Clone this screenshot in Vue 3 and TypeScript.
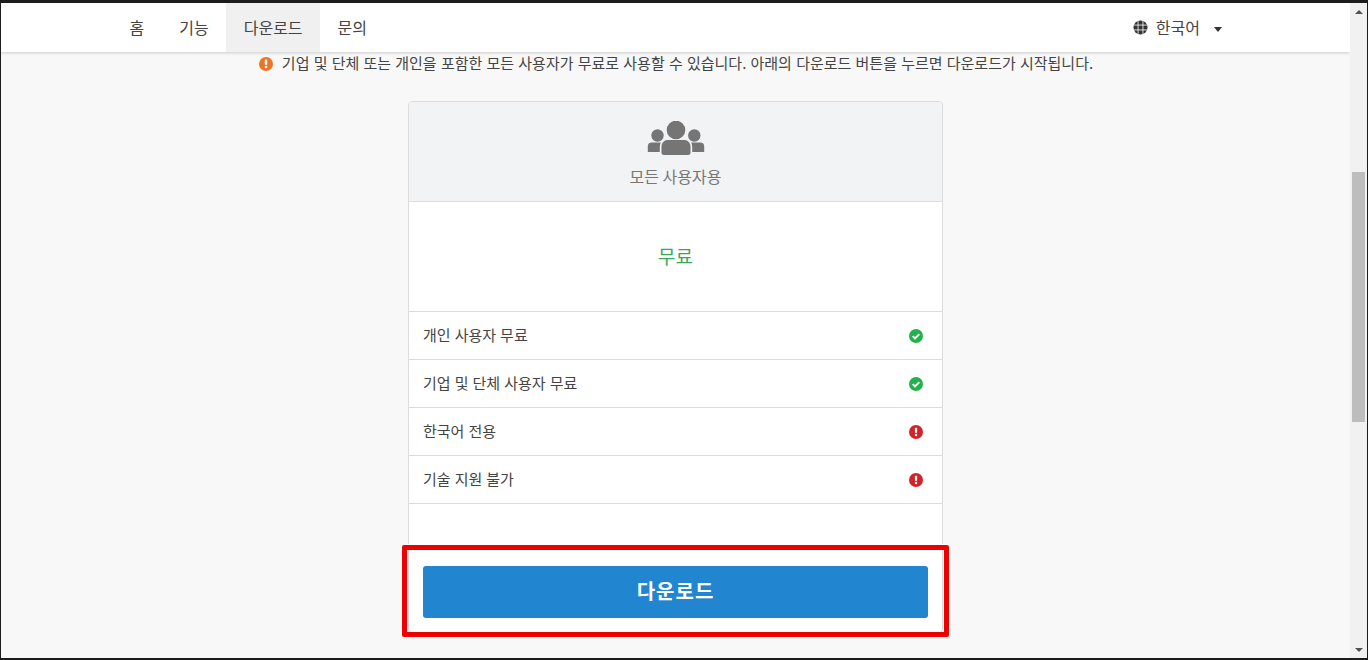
<script setup lang="ts">
const navItems = [
  { label: '홈', active: false },
  { label: '기능', active: false },
  { label: '다운로드', active: true },
  { label: '문의', active: false }
]

const features = [
  { label: '개인 사용자 무료', ok: true },
  { label: '기업 및 단체 사용자 무료', ok: true },
  { label: '한국어 전용', ok: false },
  { label: '기술 지원 불가', ok: false }
]
</script>

<template>
  <div class="frame">
    <div class="page">
      <div class="content">
        <header class="nav">
          <ul class="nav-list">
            <li v-for="item in navItems" :key="item.label" class="nav-item" :class="{ active: item.active }">
              {{ item.label }}
            </li>
          </ul>
          <div class="lang">
            <svg class="globe" viewBox="0 0 16 16">
              <circle cx="8" cy="8" r="7.5" fill="#333" />
              <path d="M1 5.4h14M1 10.6h14M5.4 1v14M10.6 1v14" stroke="#fff" stroke-width="1" fill="none" opacity="0.85" />
            </svg>
            <span class="lang-label">한국어</span>
            <i class="caret"></i>
          </div>
        </header>

        <main class="main">
          <p class="notice">
            <svg class="notice-icon" viewBox="0 0 16 16">
              <circle cx="8" cy="8" r="7" fill="#ee7423" />
              <rect x="6.8" y="3.6" width="2.4" height="5.4" rx="0.8" fill="#fff" />
              <circle cx="8" cy="11" r="1.3" fill="#fff" />
            </svg>
            <span class="notice-text">기업 및 단체 또는 개인을 포함한 모든 사용자가 무료로 사용할 수 있습니다. 아래의 다운로드 버튼을 누르면 다운로드가 시작됩니다.</span>
          </p>

          <section class="card">
            <div class="card-head">
              <svg class="users" viewBox="0 0 58 36">
                <circle cx="29" cy="9" r="9.300" fill="#757575" />
                <circle cx="10.500" cy="14.500" r="6.200" fill="#757575" />
                <circle cx="47.300" cy="14.500" r="6.200" fill="#757575" />
                <path d="M0.800 31v-5.500a4 4 0 0 1 4-4h9c-0.600 1.500-1 3-1 5v4.500z" fill="#757575" />
                <path d="M57.200 31v-5.500a4 4 0 0 0-4-4h-9c0.600 1.500 1 3 1 5v4.500z" fill="#757575" />
                <path d="M14.500 25.500c0-3.500 2.500-6.500 6-6.500h17c3.500 0 6 3 6 6.500v6a2.500 2.500 0 0 1-2.500 2.500h-24a2.500 2.500 0 0 1-2.500-2.500z" fill="#757575" />
              </svg>
              <div class="card-title">모든 사용자용</div>
            </div>
            <div class="price"><span class="price-text">무료</span></div>
            <ul class="features">
              <li v-for="f in features" :key="f.label" class="feature">
                <span class="feature-label">{{ f.label }}</span>
                <svg v-if="f.ok" class="mark" viewBox="0 0 14 14">
                  <circle cx="7" cy="7" r="7" fill="#22b14c" />
                  <path d="M3.700 7.200l2.300 2.300 4.300-4.400" stroke="#fff" stroke-width="1.900" fill="none" />
                </svg>
                <svg v-else class="mark" viewBox="0 0 14 14">
                  <circle cx="7" cy="7" r="7" fill="#d2232a" />
                  <rect x="5.900" y="2.800" width="2.200" height="5.200" rx="0.700" fill="#fff" />
                  <circle cx="7" cy="10" r="1.200" fill="#fff" />
                </svg>
              </li>
            </ul>
            <div class="card-foot">
              <button class="download" type="button">다운로드</button>
            </div>
          </section>
        </main>

        <div class="highlight"></div>
      </div>

      <div class="scrollbar">
        <span class="arrow up"></span>
        <div class="track"><div class="thumb"></div></div>
        <span class="arrow down"></span>
      </div>
    </div>
  </div>
</template>

<style>
html,
body {
  margin: 0;
  overflow: hidden;
}
</style>

<style scoped>
.frame {
  width: 1368px;
  height: 660px;
  box-sizing: border-box;
  border-top: 3px solid #1c1c1c;
  border-left: 1px solid #1c1c1c;
  border-right: 1px solid #1c1c1c;
  border-bottom: 2px solid #1c1c1c;
  font-family: "Noto Sans CJK KR", "Noto Sans", sans-serif;
  color: #333;
  overflow: hidden;
}

.page {
  display: flex;
  height: 100%;
}

.content {
  position: relative;
  flex: 1;
  min-width: 0;
  background: #f8f8f8;
  overflow: hidden;
}

.nav {
  display: flex;
  justify-content: space-between;
  align-items: stretch;
  height: 49px;
  padding: 0 128px 0 111px;
  background: #fff;
  box-shadow: 0 1px 3px rgba(0, 0, 0, 0.18);
  position: relative;
}

.nav-list {
  display: flex;
  list-style: none;
  margin: 0;
  padding: 0;
}

.nav-item {
  display: flex;
  align-items: center;
  padding: 0 17.500px 2px;
  font-size: 16px;
  color: #444;
}

.nav-item.active {
  background: #f0f0f0;
}

.lang {
  display: flex;
  align-items: center;
}

.globe {
  width: 15px;
  height: 15px;
}

.lang-label {
  margin: 0 0 2px 8px;
  font-size: 16px;
  color: #444;
}

.caret {
  width: 0;
  height: 0;
  margin: 3px 0 0 14px;
  border-left: 4.500px solid transparent;
  border-right: 4.500px solid transparent;
  border-top: 5px solid #333;
}

.main {
  display: flex;
  flex-direction: column;
  align-items: center;
}

.notice {
  display: flex;
  align-items: center;
  margin: 0;
  height: 22px;
  font-size: 15px;
  word-spacing: 0.850px;
  color: #444;
  white-space: nowrap;
}

.notice-icon {
  width: 16px;
  height: 16px;
  margin: 1px 8px 0 0;
}

.notice-text {
  margin-bottom: 2px;
}

.card {
  width: 535px;
  box-sizing: border-box;
  margin-top: 27px;
  background: #fff;
  border: 1px solid #dcdcdc;
  border-radius: 4px;
}

.card-head {
  display: flex;
  flex-direction: column;
  align-items: center;
  height: 100px;
  box-sizing: border-box;
  padding-top: 19px;
  background: #f2f3f5;
  border-bottom: 1px solid #dcdee0;
  border-radius: 4px 4px 0 0;
}

.users {
  width: 58px;
  height: 36px;
}

.card-title {
  margin-top: 7px;
  font-size: 16px;
  color: #777;
}

.price {
  display: flex;
  align-items: center;
  justify-content: center;
  height: 109px;
  font-size: 19px;
  color: #3aa757;
}

.price-text {
  margin-bottom: 2px;
}

.features {
  list-style: none;
  margin: 0;
  padding: 0;
}

.feature {
  display: flex;
  align-items: center;
  justify-content: space-between;
  height: 48px;
  box-sizing: border-box;
  padding: 0 19px 0 14px;
  border-top: 1px solid #dcdcdc;
  font-size: 15px;
  word-spacing: 0.700px;
  color: #444;
}

.feature:last-child {
  height: 49px;
  border-bottom: 1px solid #dcdcdc;
}

.feature-label {
  margin-bottom: 3px;
}

.mark {
  width: 14px;
  height: 14px;
}

.card-foot {
  padding: 62px 14px 14px;
}

.download {
  display: block;
  width: 100%;
  height: 52px;
  padding: 0 0 3px;
  border: none;
  border-radius: 3px;
  background: #2185d0;
  color: #fff;
  font-family: inherit;
  font-size: 20px;
  font-weight: 700;
  letter-spacing: 1px;
}

.highlight {
  position: absolute;
  left: 401px;
  top: 542px;
  width: 547px;
  height: 92px;
  box-sizing: border-box;
  border: 5px solid #ee0000;
  border-radius: 2px;
  box-shadow: 0 0 0 1px #fff;
}

.scrollbar {
  display: flex;
  flex-direction: column;
  width: 17px;
  flex: none;
  background: #f1f1f1;
}

.track {
  flex: 1;
  padding-top: 152px;
}

.thumb {
  height: 250px;
  margin: 0 2px;
  background: #bdbdbd;
}

.arrow {
  flex: none;
  display: flex;
  align-items: center;
  justify-content: center;
  height: 17px;
}

.arrow::before {
  content: "";
  width: 0;
  height: 0;
  border-left: 4px solid transparent;
  border-right: 4px solid transparent;
}

.arrow.up::before {
  border-bottom: 4px solid #505050;
}

.arrow.down::before {
  border-top: 4px solid #505050;
}
</style>
